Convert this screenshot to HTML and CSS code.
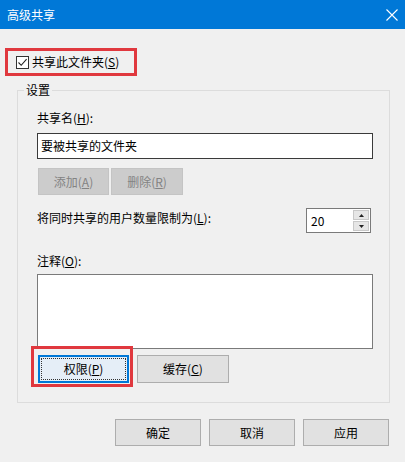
FILE: index.html
```html
<!DOCTYPE html>
<html lang="zh-CN">
<head>
<meta charset="utf-8">
<title>高级共享</title>
<link rel="stylesheet" href="styles.css">
</head>
<body>
<div class="dialog">
  <div class="titlebar">
    <span class="title">高级共享</span>
    <svg class="close" width="12" height="12" viewBox="0 0 12 12"><path d="M0.5 0.5 L11.5 11.5 M11.5 0.5 L0.5 11.5" stroke="#fff" stroke-width="1.1" fill="none"/></svg>
  </div>

  <div class="share-toggle">
    <span class="checkbox"><svg width="11" height="11" viewBox="0 0 11 11"><path d="M1.5 5.5 L4.2 8.3 L9.6 2.2" stroke="#222" stroke-width="1.1" fill="none"/></svg></span>
    <span>共享此文件夹(<u>S</u>)</span>
  </div>

  <div class="group">
    <div class="group-title">设置</div>
    <div class="label label-name">共享名(<u>H</u>):</div>
    <div class="textbox">要被共享的文件夹</div>
    <div class="btn-row">
      <span class="btn btn-disabled btn-add">添加(<u>A</u>)</span>
      <span class="btn btn-disabled btn-del">删除(<u>R</u>)</span>
    </div>
    <div class="limit-row">
      <span class="label limit-label">将同时共享的用户数量限制为(<u>L</u>):</span>
      <div class="spinner">
        <span class="spin-value">20</span>
        <span class="spin-buttons">
          <span class="spin-btn"><svg width="5" height="3" viewBox="0 0 5 3"><path d="M0 3 L2.5 0 L5 3 Z" fill="#222"/></svg></span>
          <span class="spin-btn"><svg width="5" height="3" viewBox="0 0 5 3"><path d="M0 0 L2.5 3 L5 0 Z" fill="#222"/></svg></span>
        </span>
      </div>
    </div>
    <div class="label label-note">注释(<u>O</u>):</div>
    <div class="textarea"></div>
    <div class="btn-row btn-row2">
      <span class="highlight">
        <span class="btn btn-focus"><span class="focus-rect">权限(<u>P</u>)</span></span>
      </span>
      <span class="btn btn-cache">缓存(<u>C</u>)</span>
    </div>
  </div>

  <div class="footer">
    <span class="btn btn-foot">确定</span>
    <span class="btn btn-foot">取消</span>
    <span class="btn btn-foot">应用</span>
  </div>
</div>
</body>
</html>
```

FILE: styles.css
```css
* { box-sizing: border-box; }
html, body { margin: 0; padding: 0; }
body {
  background: #f0f0f0;
  font-family: "Noto Sans CJK SC", "Noto Sans", sans-serif;
  font-size: 12px;
  line-height: 16px;
  color: #000;
}
.dialog {
  width: 405px;
  height: 462px;
  overflow: hidden;
  background: #f0f0f0;
}
u { text-decoration: underline; text-underline-offset: 1px; }

.titlebar {
  height: 29px;
  background: #0078d7;
  color: #fff;
  display: flex;
  align-items: center;
  justify-content: space-between;
  padding: 0 7px 0 7px;
}
.close { display: block; margin-top: 0; }

.share-toggle {
  margin: 19px 0 0 5px;
  width: 132px;
  height: 28px;
  border: 3px solid #e0383e;
  display: flex;
  align-items: center;
  gap: 3px;
  padding-left: 8px;
}
.checkbox {
  width: 13px;
  height: 13px;
  border: 1px solid #333;
  background: #fff;
  display: flex;
  align-items: center;
  justify-content: center;
}
.checkbox svg { display: block; }

.group {
  margin: 14px 0 0 17px;
  width: 373px;
  height: 313px;
  border: 1px solid #dcdcdc;
  padding: 0 16px 0 19px;
}
.group-title {
  margin: -9px 0 0 -13px;
  padding: 0 2px;
  width: fit-content;
  background: #f0f0f0;
}
.label-name { margin-top: 12px; }
.textbox {
  margin-top: 7px;
  height: 26px;
  border: 1px solid #3a3a3a;
  background: #fff;
  padding: 0 3px;
  display: flex;
  align-items: center;
}
.btn-row {
  display: flex;
  gap: 2px;
  margin: 9px 0 0 1px;
}
.btn {
  display: flex;
  align-items: center;
  justify-content: center;
  height: 27px;
  background: #e1e1e1;
  border: 1px solid #adadad;
}
.btn-disabled {
  background: #cccccc;
  border-color: #c4c4c4;
  color: #838383;
}
.btn-add { width: 71px; }
.btn-del { width: 72px; }

.limit-row {
  margin-top: 13px;
  display: flex;
  justify-content: space-between;
  align-items: flex-start;
}
.limit-label { margin-top: 2px; }
.spinner {
  width: 65px;
  height: 25px;
  margin-right: 2px;
  border: 1px solid #7a7a7a;
  background: #fff;
  display: flex;
  align-items: center;
  justify-content: space-between;
  padding: 1px 1px 1px 4px;
}
.spin-buttons {
  display: flex;
  flex-direction: column;
  gap: 1px;
  height: 21px;
  width: 16px;
}
.spin-btn {
  flex: 1;
  background: #e6e6e6;
  border: 1px solid #c8c8c8;
  display: flex;
  align-items: center;
  justify-content: center;
}
.spin-btn svg { display: block; }

.label-note { margin-top: 20px; }
.textarea {
  margin-top: 5px;
  height: 75px;
  border: 1px solid #7a7a7a;
  background: #fff;
}
.btn-row2 {
  margin-top: 6px;
  gap: 8px;
}
.highlight {
  position: relative;
  display: block;
}
.highlight::after {
  content: "";
  position: absolute;
  left: -7px;
  top: -9px;
  right: -4px;
  bottom: -4px;
  border: 3px solid #e0383e;
}
.btn-focus {
  width: 91px;
  height: 28px;
  border: 1px solid #0078d7;
  box-shadow: inset 0 0 0 1px #0078d7;
  background: #e5eef7;
  padding: 2px;
}
.focus-rect {
  width: 100%;
  height: 100%;
  border: 1px dotted #333;
  display: flex;
  align-items: center;
  justify-content: center;
}
.btn-cache {
  width: 92px;
  height: 28px;
}

.footer {
  margin-top: 16px;
  display: flex;
  justify-content: flex-end;
  gap: 8px;
  padding-right: 16px;
}
.btn-foot {
  width: 86px;
  height: 27px;
}
```
